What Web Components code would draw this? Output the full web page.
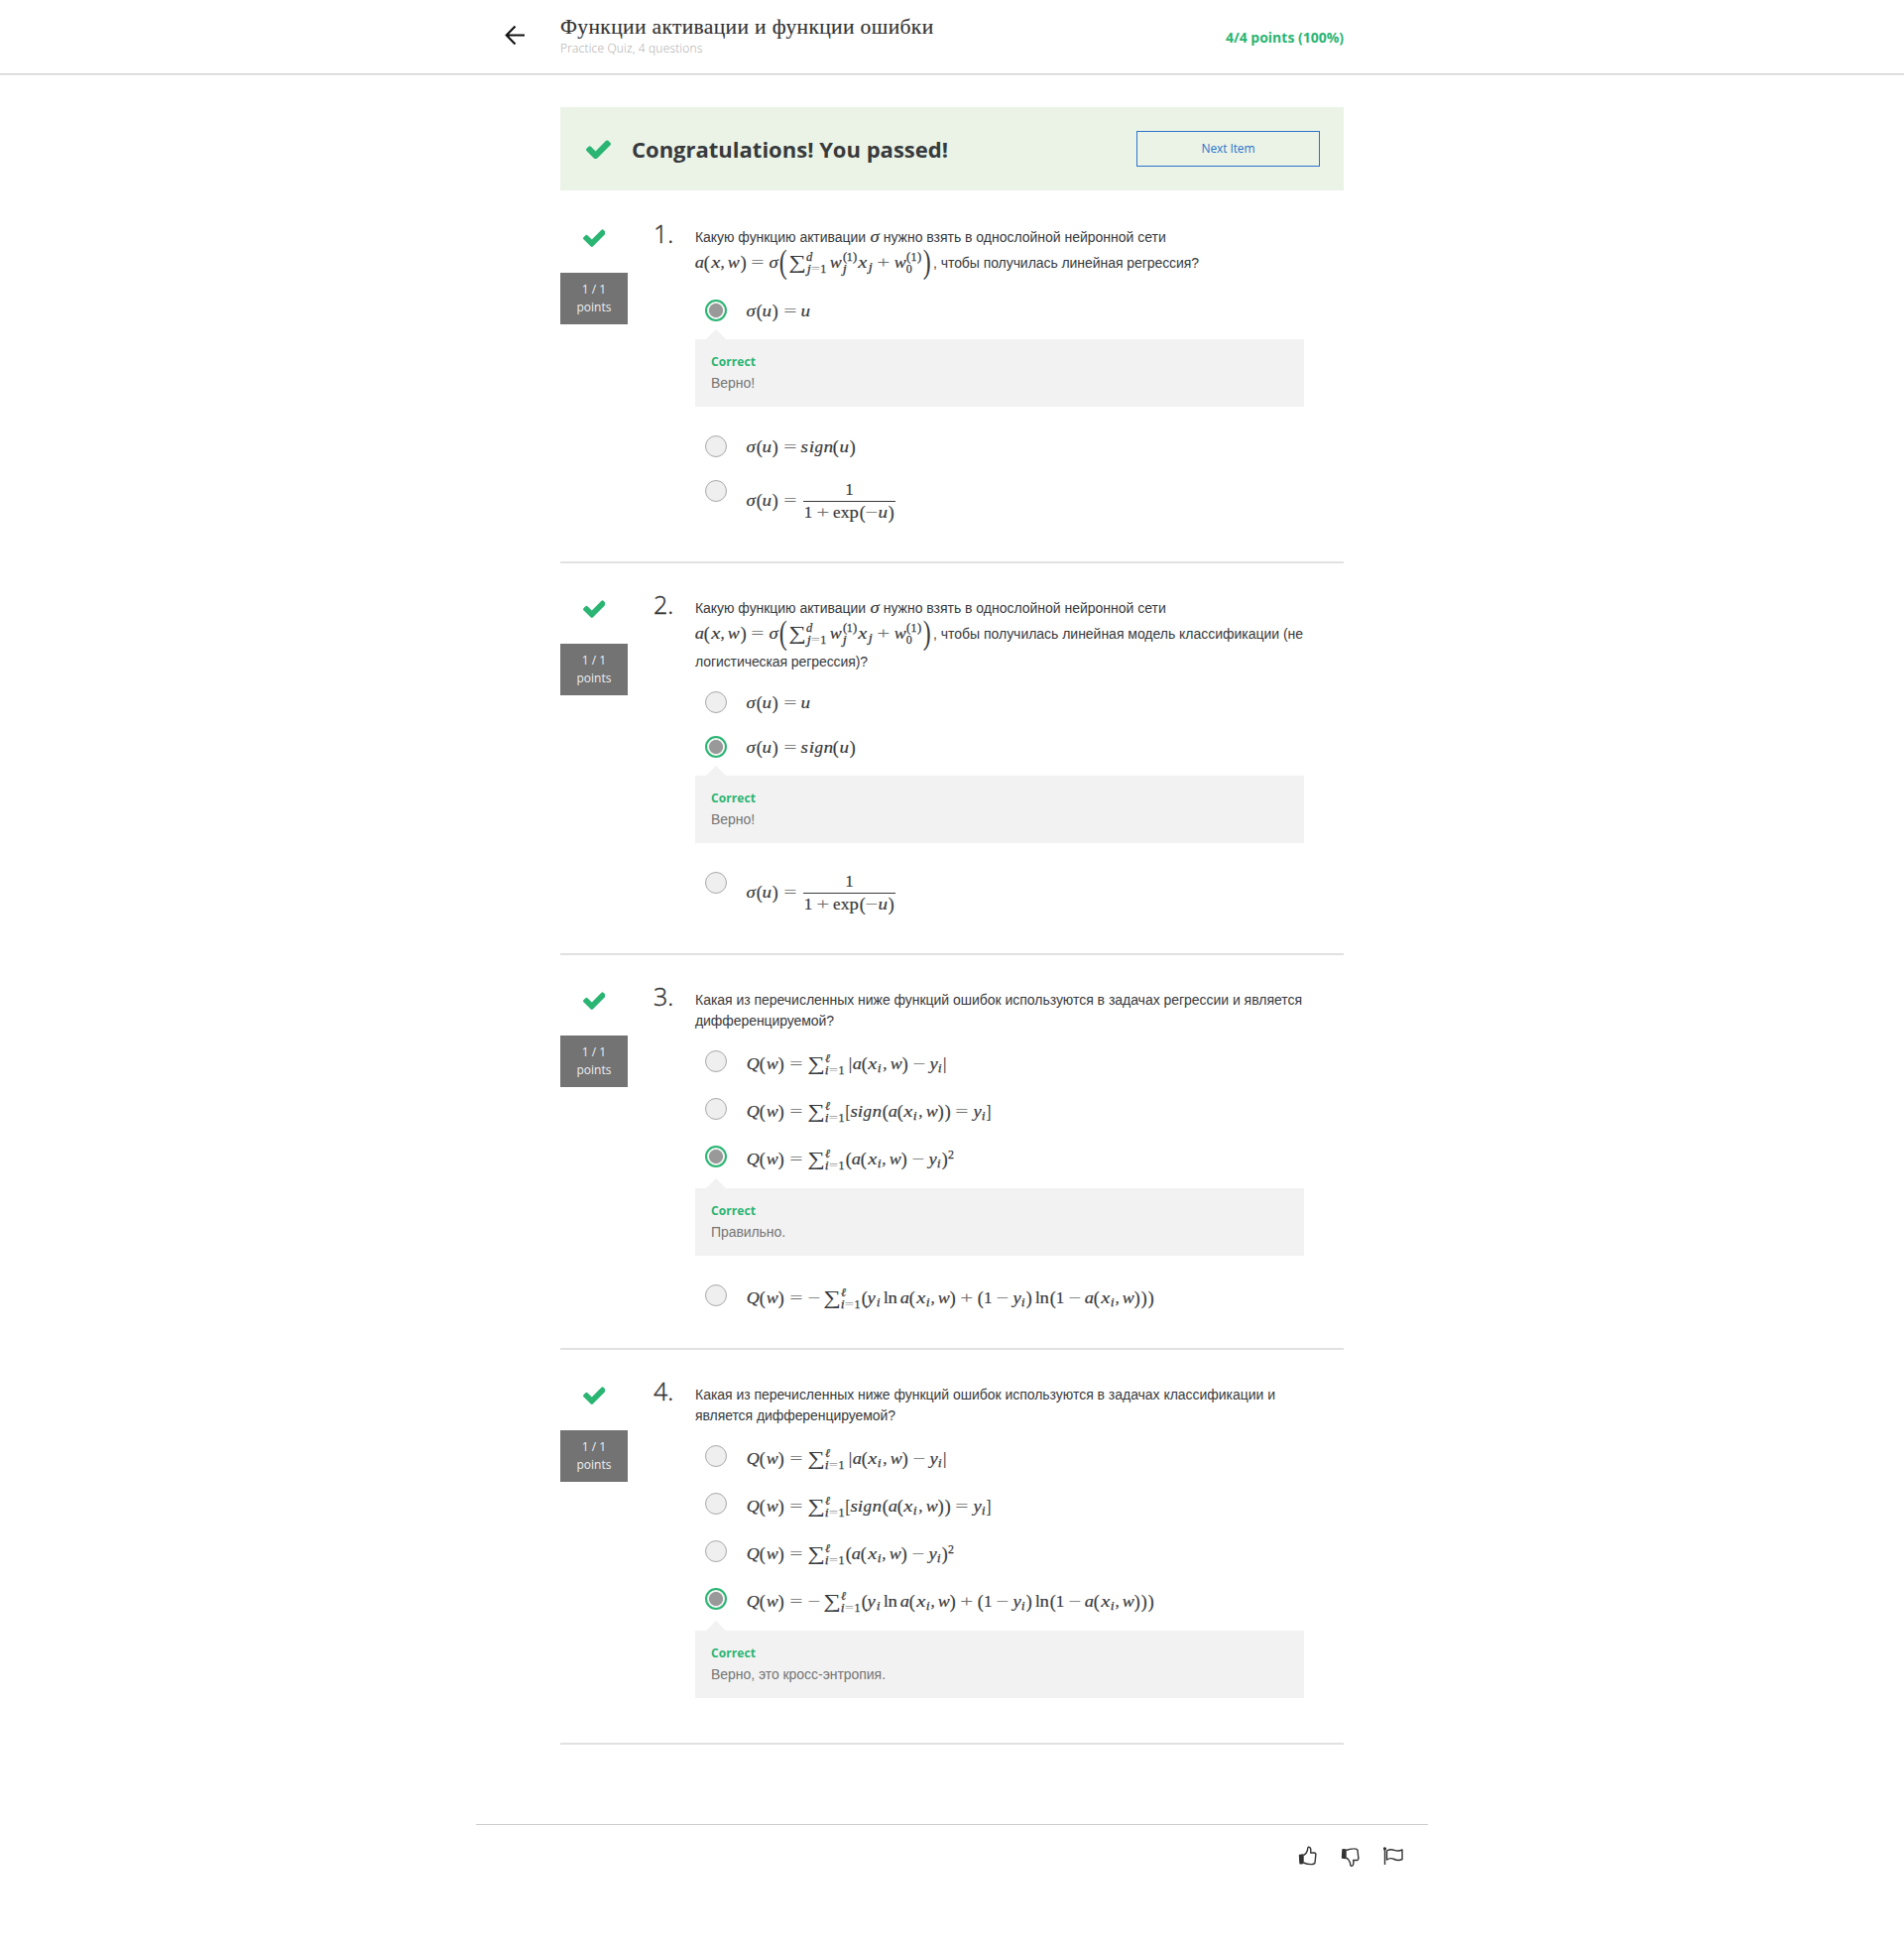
<!DOCTYPE html>
<html lang="ru">
<head>
<meta charset="utf-8">
<title>Функции активации и функции ошибки</title>
<style>
body{margin:0;background:#fff;color:#373a3c;font-family:"Liberation Sans",Arial,sans-serif;font-size:14px}
quiz-page:not(:defined){visibility:hidden}
</style>
</head>
<body>
<quiz-page></quiz-page>
<script>
const define = (name, html, setup) => {
  const t = document.createElement('template');
  t.innerHTML = html;
  customElements.define(name, class extends HTMLElement {
    connectedCallback() {
      if (this.shadowRoot) return;
      this.attachShadow({mode: 'open'}).append(t.content.cloneNode(true));
      if (setup) setup(this, this.shadowRoot);
    }
  });
};

/* A single line of text, tracked so that it fills the given width. */
define('fit-text', `<style>:host{display:inline-block;white-space:pre}</style><span><slot></slot></span>`, (el, root) => {
  const span = root.querySelector('span'), want = +el.getAttribute('w');
  const n = el.textContent.length;
  const have = span.getBoundingClientRect().width;
  if (want && n > 1) el.style.letterSpacing = ((want - have) / n) + 'px';
});

/* Math typesetting: advance widths (em) and horizontal glyph scales. */
const ITALIC = {a:[.529,1.08],x:[.572,1.2],w:[.716,1.06],u:[.572,1.12],y:[.49,1.1],Q:[.791,1.06],s:[.469,1.12],i:[.345,1.15],g:[.477,1],n:[.6,1.14],j:[.412,1.2],d:[.52,1.04],'σ':[.571,1.1],'ℓ':[.417,1]};
const ROMAN = {'(':[.389,'1.05,1.12'],')':[.389,'1.05,1.12'],'[':[.278,'.85,1.1'],']':[.278,'.85,1.1'],'|':[.278,1],'0':[.5,1],'1':[.5,1],'2':[.5,1],',':[.278,1],'l':[.278,1],'n':[.556,1.1],'e':[.444,1],'x':[.528,1.04],'p':[.556,1.1],'+':[.778,1.36],'−':[.778,1.36],'=':[.778,1.38]};
const glyph = (c, roman, script) => {
  const m = (roman ? ROMAN[c] : (ITALIC[c] || ROMAN[c])) || [.5, 1];
  const it = !roman && ITALIC[c];
  let pad = '';
  if (!script) {
    if (c === '=') pad = 'margin:0 .278em;';
    if (c === '+' || c === '−') pad = 'margin:0 .222em;';
    if (c === ',') pad = 'margin-right:.167em;';
  }
  const op = '=+−'.includes(c) ? ' op' : '';
  const sc = typeof m[1] === 'string' ? `scale(${m[1]})` : `scaleX(${m[1]})`;
  return `<span class="g${it ? ' it' : ''}${op}" style="width:${m[0]}em;${pad}"><span style="transform:${sc}">${c}</span></span>`;
};
const render = (src, script) => {
  let out = '', i = 0;
  const group = () => {
    if (src[i] !== '{') return src[i++];
    let d = 1, j = ++i;
    while (d) { if (src[j] === '{') d++; if (src[j] === '}') d--; j++; }
    const s = src.slice(i, j - 1); i = j; return s;
  };
  while (i < src.length) {
    const c = src[i];
    if (c === '_' || c === '^') {
      let sub = '', sup = '';
      while (src[i] === '_' || src[i] === '^') { if (src[i++] === '_') sub = group(); else sup = group(); }
      const cls = (sub && sup) ? ' both' : '';
      out += `<span class="scr${cls}">${sup ? `<span class="sup">${render(sup, true)}</span>` : ''}${sub ? `<span class="sub">${render(sub, true)}</span>` : ''}</span>`;
    } else if (c === '\\') {
      const m = /^\\([a-zA-Z]+)/.exec(src.slice(i)); i += m[0].length;
      if (m[1] === 'sum') out += '<span class="g sum"><span>∑</span></span>';
      else if (m[1] === 'lp') out += '<span class="g big"><span>(</span></span>';
      else if (m[1] === 'rp') out += '<span class="g big"><span>)</span></span>';
      else if (m[1] === 'sp') out += '<span class="sp"></span>';
      else if (m[1] === 'neg') out += '<span class="g op" style="width:.778em"><span style="transform:scaleX(1.36)">−</span></span>';
      else if (m[1] === 'frac') { const a = group(), b = group(); out += `<span class="frac"><span class="num">${render(a)}</span><span class="den">${render(b)}</span></span>`; }
      else out += [...m[1]].map(k => glyph(k, true)).join('');
    } else if (c === ' ') i++;
    else { out += glyph(c, false, script); i++; }
  }
  return out;
};
define('math-tex', `<style>
:host{display:inline-flex;align-items:baseline;font:17px/21px "Liberation Serif","Times New Roman",serif;height:21px;white-space:nowrap;color:#373a3c}
.g{display:inline-flex;justify-content:center;flex:none}
.g>span{display:inline-block;-webkit-text-stroke:.2px}
.it{font-style:italic}
.op{color:#6d6f70}
.op>span{-webkit-text-stroke:0}
.sum{width:1.056em}.sum>span{transform:scale(1.45,1.18);-webkit-text-stroke:0}
.big{width:.597em}.big>span{transform:translateY(-.5px) scale(1.4,2);-webkit-text-stroke:0}
.scr{display:inline-grid;margin-right:.05em}
.scr>span{grid-area:1/1;display:inline-flex;align-items:baseline;font-size:12px;justify-self:start;line-height:21px}
.sup{transform:translateY(-6.5px)}.sub{transform:translateY(3px)}
.both .sup{transform:translateY(-7.5px)}.both .sub{transform:translateY(5px)}
.scr .g>span{-webkit-text-stroke:.25px}
.scr .op>span{-webkit-text-stroke:0}
.scr .op{color:#999}
.sp{width:.167em}
.frac{display:inline-flex;flex-direction:column;align-items:center;transform:translateY(-11px);margin-left:.12em}
.num,.den{display:inline-flex;align-items:baseline;height:24px;padding:0 1px}
.num{border-bottom:1px solid #373a3c;align-self:stretch;justify-content:center;height:22px}
</style><slot hidden></slot><span id="m" style="display:contents"></span>`, (el, root) => {
  root.getElementById('m').innerHTML = render(el.textContent.trim());
});

define('check-icon', `<style>:host{display:block;color:#2ab573}svg{display:block}</style>
<svg viewBox="121 310 1550 1214" fill="currentColor"><path d="M1671 566q0 40-28 68l-724 724-136 136q-28 28-68 28t-68-28l-136-136-362-362q-28-28-28-68t28-68l136-136q28-28 68-28t68 28l294 295 656-657q28-28 68-28t68 28l136 136q28 28 28 68z"/></svg>`);

define('quiz-header', `<style>
:host{display:block;height:74px;border-bottom:1px solid #cfcfcf;box-shadow:0 1px 0 #ebebeb}
.in{display:flex;height:74px;width:846px;margin-left:509px}
.back{width:56px;flex:none;padding-top:25px;box-sizing:border-box}
.t{flex:1;padding-top:13px}
h1{margin:0;font:400 21.5px/28px "Liberation Serif",serif;height:28px;color:#333;-webkit-text-stroke:.15px}
.sub{font:300 12px/16px "Open Sans",sans-serif;color:#aaa}
.sc{font:700 14px/20px "Open Sans",sans-serif;color:#2ab573;padding-top:28px}
</style>
<div class="in"><div class="back"><svg width="21" height="21" viewBox="0 0 21 21" fill="none" stroke="#111" stroke-width="2.1"><path d="M1.5 10.500H20M10.500 1.500L1.700 10.500L10.500 19.500"/></svg></div>
<div class="t"><h1><fit-text w="376.500">Функции активации и функции ошибки</fit-text></h1><div class="sub"><fit-text w="143.500">Practice Quiz, 4 questions</fit-text></div></div>
<div class="sc"><fit-text w="119">4/4 points (100%)</fit-text></div></div>`);

define('pass-banner', `<style>
:host{display:flex;align-items:center;height:84px;background:#ebf3e7;padding:0 24px 0 26px;box-sizing:border-box}
check-icon{width:25px;padding-top:1px}
h2{margin:0 0 0 21px;flex:1;font:700 22px/30px "Open Sans",sans-serif;color:#373a3c}
button{width:185px;height:36px;border:1px solid #2a73cc;background:none;color:#2a73cc;font:400 12px/18px "Open Sans",sans-serif;padding:0}
</style><check-icon></check-icon><h2><fit-text w="319">Congratulations! You passed!</fit-text></h2><button><fit-text w="54">Next Item</fit-text></button>`);

define('quiz-option', `<style>
:host{display:flex;height:var(--h,45px);padding-left:10px}
i{flex:none;box-sizing:border-box;width:22px;height:22px;border-radius:50%;background:#efefef;border:1px solid #a9a9a9}
:host([checked]) i{border:2px solid #2ab573;background:radial-gradient(circle at center,#999 6.6px,#f4f4f4 7.4px)}
div{padding:var(--m,1px) 0 0 19.5px}
:host([sum]){--h:48px;--m:3px}
:host([frac]){--m:10px}
</style><i></i><div><slot></slot></div>`);

define('quiz-feedback', `<style>
:host{display:block;width:614px;height:68px;background:#f2f2f2;margin:-5px 0 29px;position:relative;box-sizing:border-box;padding:13px 16px}
:host::before{content:"";position:absolute;left:11px;top:-10px;border:10px solid transparent;border-top:0;border-bottom-color:#f2f2f2}
b{display:block;font:700 12px/20px "Open Sans",sans-serif;color:#2ab573}
p{margin:0;padding-top:1px;font:14px/21px "Liberation Sans",sans-serif;color:#757575}
</style><b><fit-text w="45">Correct</fit-text></b><p><slot></slot></p>`);

define('quiz-line', `<style>:host{display:flex;align-items:baseline;height:var(--lh,21px);line-height:21px}</style><slot></slot>`);

define('quiz-question', `<style>
:host{display:flex;box-sizing:border-box;border-bottom:2px solid #e1e1e1;height:var(--qh)}
.side{width:68px;flex:none;padding-top:37px}
check-icon{width:23px;margin:0 auto 26px}
.pts{height:52px;background:#737373;color:#eee;font:12px/18px "Open Sans",sans-serif;text-align:center;box-sizing:border-box;padding-top:8px}
.num{width:68px;flex:none;padding:24px 0 0 26px;box-sizing:border-box;font:300 25px/34px "Open Sans",sans-serif;color:#333;-webkit-text-stroke:.4px}
.body{flex:1;padding-top:34px}
.q{display:block;height:var(--th)}
</style>
<div class="side"><check-icon></check-icon><div class="pts">1 / 1<br>points</div></div>
<div class="num"></div><div class="body"><div class="q"><slot name="q"></slot></div><slot></slot></div>`, (el, root) => {
  root.querySelector('.num').textContent = el.getAttribute('n') + '.';
});

define('quiz-footer', `<style>
:host{display:flex;justify-content:flex-end;box-sizing:border-box;width:960px;margin:80px auto 0;border-top:1px solid #ccc;padding:21px 25px 0 0;gap:23px;color:#333}
svg{display:block;width:20px;height:21px;fill:none;stroke:currentColor;stroke-width:1.4;stroke-linejoin:round}
</style>
<svg viewBox="0 0 20 21"><path d="M5.500 9.500Q8.500 8 9.500 4.500Q9.500 1.500 10.500 1.200Q13.500 1 12.700 7H16.500Q18.300 7.500 17.800 9.500L17 17Q16.500 18.700 13 18.600Q9 18.600 5.500 17"/><path d="M1.500 9.500L5 9V17.500L2 17.800Z" fill="currentColor"/></svg>
<svg viewBox="0 0 20 21"><g transform="translate(0 21.500) scale(1 -1)"><path d="M5.500 9.500Q8.500 8 9.500 4.500Q9.500 1.500 10.500 1.200Q13.500 1 12.700 7H16.500Q18.300 7.500 17.800 9.500L17 17Q16.500 18.700 13 18.600Q9 18.600 5.500 17"/><path d="M1.500 9.500L5 9V17.500L2 17.800Z" fill="currentColor"/></g></svg>
<svg viewBox="0 0 20 21"><path d="M1.500 3V19M3.500 5Q7 2.800 11 4.300T19 4V13.500Q15 15.500 11 13.500T3.500 14Z"/><circle cx="1.500" cy="2.800" r=".9" fill="currentColor"/></svg>`);

const U = 'σ(u)=u', SG = 'σ(u)=sign(u)', FR = 'σ(u)=\\frac{1}{1+\\exp(\\neg u)}';
const ABS = 'Q(w)=\\sum_{i=1}^{ℓ}\\sp|a(x_i,w)−y_i|', IND = 'Q(w)=\\sum_{i=1}^{ℓ}[sign(a(x_i,w))=y_i]',
  SQ = 'Q(w)=\\sum_{i=1}^{ℓ}(a(x_i,w)−y_i)^2', LOG = 'Q(w)=\\neg\\sp\\sum_{i=1}^{ℓ}(y_i\\sp\\ln\\sp a(x_i,w)+(1−y_i)\\sp\\ln(1−a(x_i,w)))';
const NET = 'a(x,w)=σ\\lp\\sum_{j=1}^{d}\\sp w_j^{(1)}x_j+w_0^{(1)}\\rp';
const o = (t, a = '') => `<quiz-option ${a}><math-tex>${t}</math-tex></quiz-option>`;
const fb = (t, w) => `<quiz-feedback><fit-text w="${w}">${t}</fit-text></quiz-feedback>`;
const line1 = `<quiz-line slot="q" style="--lh:26px"><fit-text w="172">Какую функцию активации</fit-text><math-tex style="margin:0 4px">σ</math-tex><fit-text w="285">нужно взять в однослойной нейронной сети</fit-text></quiz-line>`;
define('quiz-page', `<style>
:host{display:block;height:1965px;overflow:hidden}
main{width:790px;margin:0 auto;padding-top:33px}
pass-banner{margin-bottom:2px}
</style>
<quiz-header></quiz-header>
<main><pass-banner></pass-banner>
<quiz-question n="1" style="--qh:374px;--th:74px">${line1}
<quiz-line slot="q"><math-tex>${NET}</math-tex><fit-text w="268" style="margin-left:1px">, чтобы получилась линейная регрессия?</fit-text></quiz-line>
${o(U, 'checked')}${fb('Верно!', 44)}${o(SG)}${o(FR, 'frac')}</quiz-question>
<quiz-question n="2" style="--qh:395px;--th:95px">${line1}
<quiz-line slot="q" style="--lh:29px"><math-tex>${NET}</math-tex><fit-text w="373" style="margin-left:1px">, чтобы получилась линейная модель классификации (не</fit-text></quiz-line>
<quiz-line slot="q"><fit-text w="174">логистическая регрессия)?</fit-text></quiz-line>
${o(U)}${o(SG, 'checked')}${fb('Верно!', 44)}${o(FR, 'frac')}</quiz-question>
<quiz-question n="3" style="--qh:398px;--th:62px">
<quiz-line slot="q" style="padding-top:1px"><fit-text w="612">Какая из перечисленных ниже функций ошибок используются в задачах регрессии и является</fit-text></quiz-line>
<quiz-line slot="q"><fit-text w="140">дифференцируемой?</fit-text></quiz-line>
${o(ABS, 'sum')}${o(IND, 'sum')}${o(SQ, 'sum checked')}${fb('Правильно.', 75)}${o(LOG, 'sum')}</quiz-question>
<quiz-question n="4" style="--qh:398px;--th:62px">
<quiz-line slot="q" style="padding-top:1px"><fit-text w="585">Какая из перечисленных ниже функций ошибок используются в задачах классификации и</fit-text></quiz-line>
<quiz-line slot="q"><fit-text w="202">является дифференцируемой?</fit-text></quiz-line>
${o(ABS, 'sum')}${o(IND, 'sum')}${o(SQ, 'sum')}${o(LOG, 'sum checked')}${fb('Верно, это кросс-энтропия.', 176)}</quiz-question>
</main>
<quiz-footer></quiz-footer>`);
</script>
</body>
</html>
